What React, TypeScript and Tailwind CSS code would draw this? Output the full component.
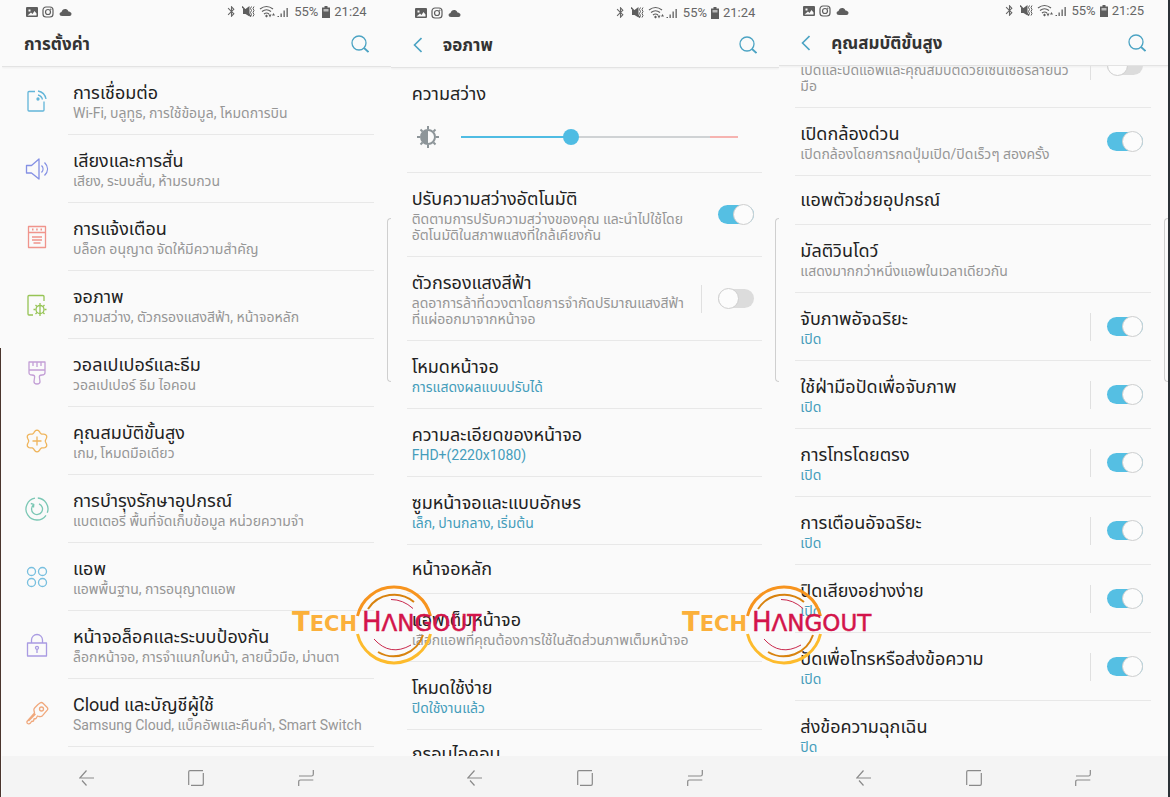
import type { ReactNode } from "react";
import { MdBluetooth } from "react-icons/md";

type Item = {
  title: string;
  sub?: string;
  active?: boolean;
  icon?: ReactNode;
  on?: boolean;
  divider?: boolean;
};

// six-lobed gear outline, one lobe pointing up
const gear = Array.from({ length: 72 }, (_, i) => {
  const a = (i / 72) * Math.PI * 2;
  const r = 9.6 + 1.3 * Math.cos(6 * a);
  return `${12 + r * Math.sin(a)},${12 - r * Math.cos(a)}`;
}).join(" ");

const icons = {
  connect: (
    <g stroke="#62b5d9">
      <path d="M10 2.500H4a1 1 0 0 0-1 1V21a1 1 0 0 0 1 1h14a1 1 0 0 0 1-1v-8.500" />
      <path d="M13 6a6 6 0 0 1 4.500 4.500M13 2a10 10 0 0 1 8 8" />
      <circle cx="13" cy="10" r="1" fill="#62b5d9" />
    </g>
  ),
  sound: (
    <g stroke="#8490e4">
      <path d="M1.500 8.500h5L14 2v20l-7.500-6h-5Z" />
      <path d="M16.500 8.500c2 2 2 5 0 7M19.500 5.500c4 4 4 9 0 13" />
    </g>
  ),
  notify: (
    <g stroke="#f0948c">
      <path d="M3.500 1.500h17v21h-17ZM3.500 7.500h17M7 12h10M7 15h10M8.500 18h7" />
      <path d="M7 4.500h1.500M11.200 4.500h1.500M15.500 4.500H17" strokeWidth="2" />
    </g>
  ),
  display: (
    <g stroke="#96c455">
      <path d="M19 8V3.500a1 1 0 0 0-1-1H4a1 1 0 0 0-1 1V21a1 1 0 0 0 1 1h4" />
      <circle cx="15" cy="16.500" r="4" />
      <path d="M15 10v13M8.500 16.500h2M19.500 16.500h2M10.500 12l1.500 1.500M19.500 12 18 13.500M10.500 21l1.500-1.500M19.500 21 18 19.500" />
    </g>
  ),
  brush: (
    <g stroke="#c39fd6">
      <path d="M4 1h16v10.500c0 2-1 2.500-3 2.500-2.500 0-3 1-2.500 3l.5 3.500a3 2.500 0 0 1-6 0l.5-3.500c.5-2 0-3-2.500-3-2 0-3-.5-3-2.500ZM4 9h16M8 1v4M12 1v5M16 1v4" />
    </g>
  ),
  advanced: (
    <g stroke="#efb55d">
      <polygon points={gear} />
      <path d="M12 7.500v9M7.500 12h9" />
    </g>
  ),
  care: (
    <g stroke="#7ac7b4">
      <path d="M12.800 1A11 11 0 0 1 22.300 15.800M21 18.300A11 11 0 1 1 10 1.200" />
      <path d="M14 6.900A5.500 5.500 0 1 1 8.500 7.800M5.800 6.500l3 .8-.3 3.200" />
    </g>
  ),
  apps: (
    <g stroke="#77bfdf">
      <circle cx="6.500" cy="6.500" r="4" />
      <circle cx="17.500" cy="6.500" r="4" />
      <circle cx="6.500" cy="17.500" r="4" />
      <circle cx="17.500" cy="17.500" r="4" />
    </g>
  ),
  lock: (
    <g stroke="#a99be2">
      <path d="M2.500 10h19v13h-19ZM6.500 10V7a5.500 5.500 0 0 1 11 0v3M12 16.300V20" />
      <circle cx="12" cy="14.800" r="1.500" />
    </g>
  ),
  key: (
    <g stroke="#f0a87c">
      <path d="m13 3.500 2-1.500c1-.7 2-.7 3 .2l4 4c1 1 1 2 .2 3l-4.700 5.500c-1 1-2 1.200-3.500.8l-1.500-.5-1.500 2.500-2 .5-.5 2-2 .5-1 1.500c-1.500 1.500-4 1-3.500-1.500L9.500 12 9 9.500c-.3-1 0-2 .8-2.800ZM3.500 20l7-7" />
      <circle cx="16.500" cy="8" r="2" />
    </g>
  ),
};

const settings: Item[] = [
  { icon: icons.connect, title: "การเชื่อมต่อ", sub: "Wi-Fi, บลูทูธ, การใช้ข้อมูล, โหมดการบิน" },
  { icon: icons.sound, title: "เสียงและการสั่น", sub: "เสียง, ระบบสั่น, ห้ามรบกวน" },
  { icon: icons.notify, title: "การแจ้งเตือน", sub: "บล็อก อนุญาต จัดให้มีความสำคัญ" },
  { icon: icons.display, title: "จอภาพ", sub: "ความสว่าง, ตัวกรองแสงสีฟ้า, หน้าจอหลัก" },
  { icon: icons.brush, title: "วอลเปเปอร์และธีม", sub: "วอลเปเปอร์ ธีม ไอคอน" },
  { icon: icons.advanced, title: "คุณสมบัติขั้นสูง", sub: "เกม, โหมดมือเดียว" },
  { icon: icons.care, title: "การบำรุงรักษาอุปกรณ์", sub: "แบตเตอรี่ พื้นที่จัดเก็บข้อมูล หน่วยความจำ" },
  { icon: icons.apps, title: "แอพ", sub: "แอพพื้นฐาน, การอนุญาตแอพ" },
  { icon: icons.lock, title: "หน้าจอล็อคและระบบป้องกัน", sub: "ล็อกหน้าจอ, การจำแนกใบหน้า, ลายนิ้วมือ, ม่านตา" },
  { icon: icons.key, title: "Cloud และบัญชีผู้ใช้", sub: "Samsung Cloud, แบ็คอัพและคืนค่า, Smart Switch" },
];

const display: Item[] = [
  { title: "ปรับความสว่างอัตโนมัติ", sub: "ติดตามการปรับความสว่างของคุณ และนำไปใช้โดย\nอัตโนมัติในสภาพแสงที่ใกล้เคียงกัน", on: true },
  { title: "ตัวกรองแสงสีฟ้า", sub: "ลดอาการล้าที่ดวงตาโดยการจำกัดปริมาณแสงสีฟ้า\nที่แผ่ออกมาจากหน้าจอ", on: false, divider: true },
  { title: "โหมดหน้าจอ", sub: "การแสดงผลแบบปรับได้", active: true },
  { title: "ความละเอียดของหน้าจอ", sub: "FHD+(2220x1080)", active: true },
  { title: "ซูมหน้าจอและแบบอักษร", sub: "เล็ก, ปานกลาง, เริ่มต้น", active: true },
  { title: "หน้าจอหลัก" },
  { title: "แอพเต็มหน้าจอ", sub: "เลือกแอพที่คุณต้องการใช้ในสัดส่วนภาพเต็มหน้าจอ" },
  { title: "โหมดใช้ง่าย", sub: "ปิดใช้งานแล้ว", active: true },
  { title: "กรอบไอคอน" },
];

const advanced: Item[] = [
  { title: "", sub: "เปิดและปิดแอพและคุณสมบัติด้วยเซ็นเซอร์ลายนิ้ว\nมือ", on: false, divider: true },
  { title: "เปิดกล้องด่วน", sub: "เปิดกล้องโดยการกดปุ่มเปิด/ปิดเร็วๆ สองครั้ง", on: true },
  { title: "แอพตัวช่วยอุปกรณ์" },
  { title: "มัลติวินโดว์", sub: "แสดงมากกว่าหนึ่งแอพในเวลาเดียวกัน" },
  { title: "จับภาพอัจฉริยะ", sub: "เปิด", active: true, on: true, divider: true },
  { title: "ใช้ฝ่ามือปัดเพื่อจับภาพ", sub: "เปิด", active: true, on: true, divider: true },
  { title: "การโทรโดยตรง", sub: "เปิด", active: true, on: true, divider: true },
  { title: "การเตือนอัจฉริยะ", sub: "เปิด", active: true, on: true, divider: true },
  { title: "ปิดเสียงอย่างง่าย", sub: "เปิด", active: true, on: true, divider: true },
  { title: "ปัดเพื่อโทรหรือส่งข้อความ", sub: "เปิด", active: true, on: true, divider: true },
  { title: "ส่งข้อความฉุกเฉิน", sub: "ปิด", active: true },
];

function StatusBar({ time }: { time: string }) {
  return (
    <div className="flex h-[21px] shrink-0 items-center pr-6 pl-6 text-[13px] text-[#666]">
      <svg width="46" height="12" viewBox="0 0 46 12" fill="#5e5e5e">
        <path fillRule="evenodd" d="M1 1h10q1 0 1 1v8q0 1-1 1H1Q0 11 0 10V2q0-1 1-1Zm.5 8.500h9V7.500l-2-2.500-2 3-1.500-1.500Zm1-6v2h2v-2Z" />
        <g fill="none" stroke="#5e5e5e" strokeWidth="1.200">
          <rect x="17" y="1" width="10" height="10" rx="3" />
          <circle cx="22" cy="6" r="2.500" />
        </g>
        <circle cx="24.800" cy="3.200" r=".7" />
        <path d="M36 10q-2.500 0-2.500-2 0-1.500 2-2Q36.500 2.500 40 3q2 .5 2.500 2.500 3 .5 3 2.500T43.500 10Z" />
      </svg>
      <div className="flex-1" />
      <MdBluetooth size={13} className="mr-1" />
      <svg width="48" height="13" viewBox="0 0 48 13" fill="#5e5e5e" className="mr-1">
        <path d="M1 4h2.500L7.500 1v10.500L3.500 9H1Z" />
        <path d="m0 1.500 9 10" fill="none" stroke="#5e5e5e" strokeWidth="1.500" />
        <path d="m9.500 1.500-1 2 1 2-1 2 1 2-1 2M12 1.500l-1 2 1 2-1 2 1 2-1 2" fill="none" stroke="#5e5e5e" />
        <g fill="none" stroke="#5e5e5e" strokeWidth="1.200">
          <path d="M18 4q6.500-5 13 0M20 6.500q4.500-3.500 9 0M22 9q2.500-2 5 0" />
        </g>
        <path d="M24.500 9.500 23 11l1.500 1.500L26 11ZM26.500 9.500h3l-1.500 3ZM30 10.500h3L31.500 8Z" />
        <path d="M35.500 11H37v1h-1.500ZM38.500 8.500h1.300V12h-1.300ZM41.500 5.500h1.300V12h-1.300ZM44.500 3h1.300v9h-1.300Z" />
      </svg>
      <span>55%</span>
      <svg width="8" height="12" viewBox="0 0 8 12" className="mx-1">
        <path d="M2.500 0h3v1.500H8V12H0V1.500h2.500Z" fill="#5e5e5e" />
        <path d="M1.500 3h5v2.500h-5Z" fill="#bbb" />
      </svg>
      <span>{time}</span>
    </div>
  );
}

function Header({ title, back }: { title: string; back?: boolean }) {
  return (
    <header className="flex h-[45px] shrink-0 items-center border-b border-[#e3e3e3] pr-[22px] pl-[22px] shadow-xs">
      {back && (
        <button aria-label="ย้อนกลับ" className="w-[30px]">
          <svg width="9" height="16" viewBox="0 0 9 16" fill="none" stroke="#4ba3c3" strokeWidth="1.600">
            <path d="M8.500 1 1.500 8l7 7" />
          </svg>
        </button>
      )}
      <h1 className="flex-1 pt-0.5 text-[17px] font-bold text-[#333]">{title}</h1>
      <button aria-label="ค้นหา">
        <svg width="18" height="18" viewBox="0 0 18 18" fill="none" stroke="#4ba3c3" strokeWidth="1.300">
          <circle cx="8" cy="8" r="7" />
          <path d="m13 13 4.500 4" strokeWidth="1.800" />
        </svg>
      </button>
    </header>
  );
}

function Switch({ id, on }: { id: string; on: boolean }) {
  return (
    <input
      type="checkbox"
      role="switch"
      id={id}
      defaultChecked={on}
      className="mr-2 flex h-[19px] w-9 shrink-0 appearance-none items-center rounded-full bg-[#dcdcdc] before:size-[21px] before:shrink-0 before:rounded-full before:border before:border-[#cfcfcf] before:bg-[#fcfcfc] checked:justify-end checked:bg-[#55bfe3]"
    />
  );
}

function Row({ item, id }: { item: Item; id: string }) {
  const { title, sub, icon, on, divider, active } = item;
  const height = !sub ? "h-[49px]" : sub.includes("\n") ? "h-[84px]" : "h-[68px]";
  const text = (
    <>
      <span className="block min-h-6 text-[18px] leading-6 text-[#222]">{title}</span>
      {sub && (
        <span className={`block text-[14px] leading-4 whitespace-pre ${active ? "text-[#459dbb]" : "text-[#969696]"}`}>
          {sub}
        </span>
      )}
    </>
  );
  return (
    <li className={`flex shrink-0 items-stretch pr-[17px] ${height}`}>
      {icon ? (
        <div className="flex w-[66px] shrink-0 items-center pl-[23px]">
          <svg width="24" height="24" viewBox="0 0 24 24" fill="none" strokeWidth="1.300" strokeLinejoin="round">
            {icon}
          </svg>
        </div>
      ) : (
        <div className="w-4 shrink-0" />
      )}
      <div className="flex min-w-0 flex-1 items-center border-b border-[#e8e8e8] pl-[5px]">
        {on === undefined ? (
          <a href="#" className="min-w-0 flex-1">{text}</a>
        ) : (
          <>
            <label htmlFor={id} className="min-w-0 flex-1">{text}</label>
            {divider && <div className="mr-4 h-7 w-px shrink-0 bg-[#e0e0e0]" />}
            <Switch id={id} on={on} />
          </>
        )}
      </div>
    </li>
  );
}

function Brightness() {
  return (
    <div className="flex h-[105px] shrink-0 flex-col pr-[17px] pl-4">
      <div className="flex flex-1 flex-col border-b border-[#e8e8e8] pt-3.5 pr-6 pl-[5px]">
        <label htmlFor="brightness" className="text-[18px] leading-6 text-[#222]">ความสว่าง</label>
        <div className="flex items-center pt-[19px] pl-1">
          <svg width="24" height="24" viewBox="0 0 24 24" fill="none" stroke="#8d9599" strokeWidth="2">
            <circle cx="12" cy="12" r="7" />
            <path d="M12 1v3M12 20v3M1 12h3M20 12h3M4.500 4.500l2 2M17.500 17.500l2 2M4.500 19.500l2-2M17.500 6.500l2-2" />
            <path d="M12 5a7 7 0 0 0 0 14Z" fill="#8d9599" stroke="none" />
          </svg>
          <input
            id="brightness"
            type="range"
            defaultValue={39}
            className="ml-[21px] h-0.5 min-w-0 flex-1 appearance-none bg-[linear-gradient(to_right,#4fbce3_40%,#cfd2d4_40%,#cfd2d4_90%,#f6b3b0_90%)] [&::-webkit-slider-thumb]:size-4 [&::-webkit-slider-thumb]:appearance-none [&::-webkit-slider-thumb]:rounded-full [&::-webkit-slider-thumb]:bg-[#4fbce3]"
          />
        </div>
      </div>
    </div>
  );
}

function NavBar() {
  return (
    <nav className="grid h-[41px] shrink-0 grid-cols-3 items-center justify-items-center bg-[#f4f4f4] px-[30px] pt-[3px]">
      <button aria-label="กลับ">
        <svg width="16" height="16" viewBox="0 0 16 16" fill="none" stroke="#8a8a8a" strokeWidth="1.200">
          <path d="M7.500.5.8 8H15M3 10.500l4.500 5" />
        </svg>
      </button>
      <button aria-label="หน้าหลัก">
        <svg width="16" height="16" viewBox="0 0 16 16" fill="none" stroke="#8a8a8a" strokeWidth="1.200">
          <path d="M.7 15V2Q.7.7 2 .7h13M15.300 3v11q0 1.300-1.300 1.300H3" />
        </svg>
      </button>
      <button aria-label="ล่าสุด">
        <svg width="16" height="16" viewBox="0 0 16 16" fill="none" stroke="#8a8a8a" strokeWidth="1.200">
          <path d="M1 6h12.500q1.800 0 1.800-1.800V0M15.300 10H2.500Q.7 10 .7 11.800V16" />
        </svg>
      </button>
    </nav>
  );
}

function Phone({ top, time, title, back, children }: { top: string; time: string; title: string; back?: boolean; children: ReactNode }) {
  return (
    <section className={`relative flex min-w-0 flex-1 flex-col overflow-hidden ${top}`}>
      <StatusBar time={time} />
      <Header title={title} back={back} />
      <div className="flex min-h-0 flex-1 flex-col overflow-hidden">{children}</div>
      <NavBar />
      <div className="absolute top-[218px] right-0 h-[164px] w-1 rounded-l-md border-y border-l border-[#cfcfcf]" />
    </section>
  );
}

function Logo() {
  return (
    <svg width="200" height="80" viewBox="0 0 200 80" fill="none">
      <path d="M67.500 31A37.500 37.500 0 0 1 140.500 31" stroke="#f7941e" strokeWidth="3" />
      <path d="M67.500 49A37.500 37.500 0 0 0 140.500 49" stroke="#fdbb2c" strokeWidth="3" />
      <path d="M78 24a31 31 0 0 1 46-7M88 67a31 31 0 0 0 45-17" stroke="#d8830f" strokeWidth="2" />
      <path d="M101 14.500q12 0 22 9M84 54q16 18 37 6" stroke="#c9284c" strokeWidth="1" />
      <text x="2" y="46" fill="#fbb03b" fontFamily="DejaVu Sans, sans-serif" fontWeight="700" fontSize="26">
        T<tspan fontSize="21">ECH</tspan>
      </text>
      <text x="72" y="46" fill="#d3144a" stroke="#d3144a" strokeWidth=".5" fontFamily="DejaVu Sans, sans-serif" fontSize="26">
        H<tspan fontSize="23">ΛNGOUT</tspan>
      </text>
    </svg>
  );
}

export default function App() {
  return (
    <main className="relative flex h-screen overflow-hidden bg-[#fafafa] px-0.5 font-['Roboto','Noto_Sans_Thai','Noto_Sans',sans-serif]">
      <Phone top="pt-px" time="21:24" title="การตั้งค่า">
        <ul>
          {settings.map((item, i) => (
            <Row key={i} item={item} id={`settings-${i}`} />
          ))}
        </ul>
      </Phone>
      <Phone top="pt-0.5" time="21:24" title="จอภาพ" back>
        <Brightness />
        <ul>
          {display.map((item, i) => (
            <Row key={i} item={item} id={`display-${i}`} />
          ))}
        </ul>
      </Phone>
      <Phone top="pt-0" time="21:25" title="คุณสมบัติขั้นสูง" back>
        <ul className="-mt-[42px]">
          {advanced.map((item, i) => (
            <Row key={i} item={item} id={`advanced-${i}`} />
          ))}
        </ul>
      </Phone>
      <div className="absolute bottom-0 left-0 h-[449px] w-px bg-[#4a352d]" />
      <div className="absolute inset-y-0 right-0 w-0.5 bg-[#2b3136]" />
      <div className="pointer-events-none absolute top-[585px] left-1/3 -ml-[100px]">
        <Logo />
      </div>
      <div className="pointer-events-none absolute top-[585px] left-2/3 -ml-[100px]">
        <Logo />
      </div>
    </main>
  );
}
